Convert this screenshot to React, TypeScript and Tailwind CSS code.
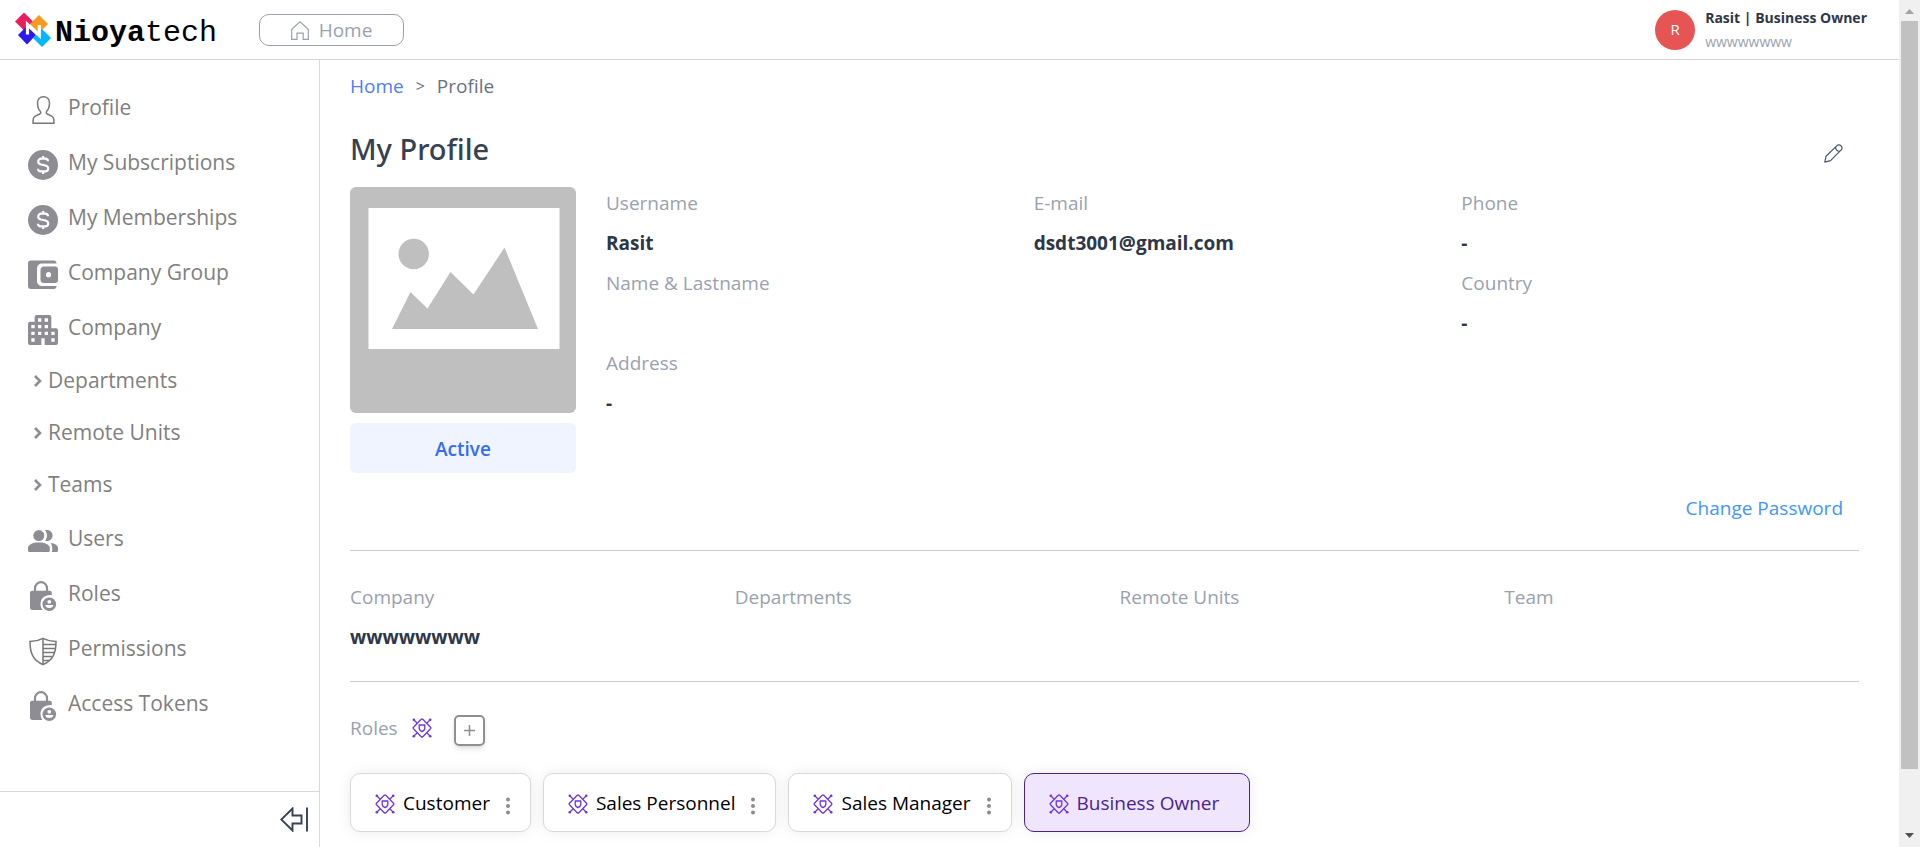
import type { ReactNode } from "react";

const Logo = () => (
  <svg viewBox="0 0 36 36" className="size-9" aria-hidden="true">
    <path d="M9 .5 18 9.500 9 18.500 0 9.500Z" fill="#e91e5c" />
    <path d="M24 3 33 12 24 21 15 12Z" fill="#f99a1c" />
    <path d="M12 14 21 23 12 32.500 3 23Z" fill="#2a1aef" />
    <path d="M27 17 36 26 27 35 18 26Z" fill="#00b8ff" />
    <path d="M12.500 22.500V12.500L24.300 23.500V13" fill="none" stroke="#fff" strokeWidth="3.200" />
  </svg>
);

const HomeIcon = () => (
  <svg viewBox="0 0 18 19" className="h-[19px] w-[18px]" fill="none" stroke="currentColor" strokeWidth="1.200" aria-hidden="true">
    <path d="M.7 8.200 9 .9l8.300 7.300v10.100h-5.100v-6.200H6v6.200H.7Z" />
  </svg>
);

const PersonIcon = () => (
  <svg viewBox="0 0 30 30" className="size-[30px]" fill="none" stroke="#77777b" strokeWidth="1.500" aria-hidden="true">
    <path d="M15.500 1.700c-3.800 0-6 2.700-6 6.300 0 3.700 1.200 6.700 3 8.600.6.900.2 1.900-.8 2.400l-4.400 2.200c-1.500.8-2.200 2-2.200 3.700v3.400h20.800v-3.400c0-1.700-.7-2.900-2.200-3.700L19.300 19c-1-.5-1.400-1.500-.8-2.400 1.800-1.900 3-4.900 3-8.600 0-3.600-2.200-6.300-6-6.300Z" />
  </svg>
);

const DollarIcon = () => (
  <svg viewBox="0 0 30 30" className="size-[30px]" aria-hidden="true">
    <circle cx="15" cy="15" r="15" fill="#8e8d94" />
    <path d="M20 11.300c0-1.500-1.200-2.700-2.800-2.700h-3.900c-1.800 0-3.100 1.300-3.100 3 0 1.600 1.100 2.600 2.700 3l4.500.9c1.700.4 2.800 1.500 2.800 3 0 1.700-1.300 2.900-3.100 2.900h-4.200c-1.700 0-2.900-1.100-2.900-2.700M15.200 6v2.500M15.200 21.500V24" fill="none" stroke="#fff" strokeWidth="2.100" />
  </svg>
);

const WalletIcon = () => (
  <svg viewBox="0 0 30 30" className="size-[30px]" fill="#8e8d94" aria-hidden="true">
    <path d="M3 .5h23c1.300 0 2.400 1 2.600 3H14.500C11 3.500 9 5.500 9 9v11.500c0 3.500 2 5.500 5.500 5.500h14.100c-.2 2-1.300 3-2.600 3H3c-1.900 0-3-1.100-3-3V3.500c0-1.900 1.100-3 3-3Z" />
    <path fillRule="evenodd" d="M16 6.500h11c1.900 0 3 1 3 2.800v11c0 1.800-1.100 2.700-3 2.700H16c-2.400 0-3.500-1.300-3.500-3.500V10c0-2.200 1.100-3.500 3.500-3.500Zm4.500 5.600a2.600 2.600 0 1 0 0 5.200 2.600 2.600 0 0 0 0-5.200Z" />
  </svg>
);

const BuildingIcon = () => (
  <svg viewBox="0 0 9 9" className="size-[30px]" aria-hidden="true">
    <path fill="#8e8d94" d="M2.600 0h3.800q.6 0 .6.600V4h1.400q.6 0 .6.600v3.800q0 .6-.6.600H.6Q0 9 0 8.400V2.600Q0 2 .6 2H2V.6Q2 0 2.600 0Z" />
    <path fill="#fff" d="M3 1h1v1H3ZM5 1h1v1H5ZM1 3h1v1H1ZM3 3h1v1H3ZM5 3h1v1H5ZM1 5h1v1H1ZM3 5h1v1H3ZM5 5h1v1H5ZM7 5h1v1H7ZM1 7h1v1H1ZM7 7h1v1H7ZM4 7h1v2H4Z" />
  </svg>
);

const UsersIcon = () => (
  <svg viewBox="0 0 30 30" className="size-[30px]" fill="#8e8d94" aria-hidden="true">
    <circle cx="10.800" cy="9.600" r="5.500" />
    <path d="M17 4.300c4.400-1 7.600 1.700 7.600 5.300s-3.200 6.300-7.600 5.300c2.700-3.100 2.700-7.500 0-10.600Z" />
    <path d="M0 22c0-3.600 4.700-5.600 10.800-5.600s11 2 11 5.600v2.500c0 1-.6 1.500-1.500 1.500H1.500C.6 26 0 25.500 0 24.500Z" />
    <path d="M22.500 16.900c4.500.5 7.500 2.300 7.500 5.100v2.500c0 1-.6 1.500-1.500 1.500h-5c.5-.7.700-1.100.7-2v-2c0-2.200-.5-3.600-1.700-5.100Z" />
  </svg>
);

const LockIcon = () => (
  <svg viewBox="0 0 30 30" className="size-[30px]" aria-hidden="true">
    <path d="M7 11V7.200a6 6 0 0 1 12 0V11" fill="none" stroke="#8e8d94" strokeWidth="2.200" />
    <path d="M4.500 9.700h17c1.500 0 2.300.8 2.300 2.300v2.200c-6.500-.7-11.300 3-11.300 8.800 0 2.300.8 4.300 2 6H4.500C3 29 2 28.100 2 26.600V12c0-1.500 1-2.300 2.500-2.300Z" fill="#8e8d94" />
    <circle cx="21.300" cy="23.200" r="6.800" fill="#8e8d94" />
    <circle cx="21.300" cy="20.800" r="1.900" fill="#fff" />
    <path d="M17.300 24h8c0 2-1.700 3-4 3s-4-1-4-3Z" fill="#fff" />
  </svg>
);

const ShieldIcon = () => (
  <svg viewBox="0 0 30 30" className="size-[30px]" fill="none" stroke="#77777b" strokeWidth="1.500" aria-hidden="true">
    <path d="M15 2.300C11 4.400 6.500 5.500 2 5.600 2 16.500 4.700 24.500 15 28.500 25.300 24.500 28 16.500 28 5.600 23.500 5.500 19 4.400 15 2.300Z" />
    <path d="M15 2.300v26M15 8.500h13M15 12.500h12.500M15 16.500h11.500M15 20.500h9.500M15 24.500h6" />
  </svg>
);

const ChevronIcon = () => (
  <svg viewBox="0 0 8 12" className="h-3 w-2" fill="none" stroke="#8e8d94" strokeWidth="2.600" aria-hidden="true">
    <path d="M1 1 6 6 1 11" />
  </svg>
);

const CollapseIcon = () => (
  <svg viewBox="0 0 28 25" className="h-[25px] w-7" fill="none" stroke="#374151" strokeWidth="1.900" aria-hidden="true">
    <path d="M12.500 1.500V8.500h9v8h-9v7L1.300 12.500ZM27 .5v24" />
  </svg>
);

const PencilIcon = () => (
  <svg viewBox="0 0 19 19" className="size-[19px]" fill="none" stroke="#475569" strokeWidth="1.200" strokeLinejoin="round" aria-hidden="true">
    <path d="M.8 18.200 2 12.300 12.700 1.900c1.400-1.400 3.100-1.400 4.300-.1 1.300 1.200 1.400 3 0 4.400L6.500 16.700Z" />
    <path d="M11.500 3.100c.1 2.500 1.800 4.200 4.300 4.300" />
  </svg>
);

const RoleIcon = () => (
  <svg viewBox="0 0 20 20" className="size-5 shrink-0" fill="none" stroke="#6d35de" strokeWidth="1.300" strokeLinejoin="round" aria-hidden="true">
    <path d="M9.200 1.300q.8-.7 1.600 0l7.700 7.900q.7.800 0 1.600l-7.700 7.900q-.8.700-1.600 0L1.500 10.800q-.7-.8 0-1.600Z" />
    <path d="M7.200 7h5.600v3.300c0 1.700-1 2.600-2.800 3.400-1.800-.8-2.800-1.700-2.800-3.400Z" />
    <path d="M1.500 1.500 5 5M18.500 1.500 15 5M1.500 18.500 5 15M18.500 18.500 15 15" />
    <g fill="#6d35de" stroke="none">
      <circle cx="1.800" cy="1.800" r="1.300" />
      <circle cx="18.200" cy="1.800" r="1.300" />
      <circle cx="1.800" cy="18.200" r="1.300" />
      <circle cx="18.200" cy="18.200" r="1.300" />
    </g>
  </svg>
);

const DotsIcon = () => (
  <svg viewBox="0 0 4 18" className="h-[18px] w-1" fill="#8b8b8f" aria-hidden="true">
    <circle cx="2" cy="2.500" r="2" />
    <circle cx="2" cy="9" r="2" />
    <circle cx="2" cy="15.500" r="2" />
  </svg>
);

const PlaceholderImage = () => (
  <svg viewBox="0 0 226 226" role="img" aria-label="Profile photo" className="w-full rounded-md">
    <rect width="226" height="226" fill="#bfbfbf" />
    <rect x="18.500" y="21" width="191" height="141" fill="#fff" />
    <circle cx="63.700" cy="67" r="15.200" fill="#bfbfbf" />
    <path d="M42 142 60.500 105 77.500 121.500 100.500 85 123.500 107.500 154.500 60.500 188 142Z" fill="#bfbfbf" />
  </svg>
);

type NavItem = { label: string; icon?: ReactNode };

const navItems: NavItem[] = [
  { label: "Profile", icon: <PersonIcon /> },
  { label: "My Subscriptions", icon: <DollarIcon /> },
  { label: "My Memberships", icon: <DollarIcon /> },
  { label: "Company Group", icon: <WalletIcon /> },
  { label: "Company", icon: <BuildingIcon /> },
  { label: "Departments" },
  { label: "Remote Units" },
  { label: "Teams" },
  { label: "Users", icon: <UsersIcon /> },
  { label: "Roles", icon: <LockIcon /> },
  { label: "Permissions", icon: <ShieldIcon /> },
  { label: "Access Tokens", icon: <LockIcon /> },
];

function Field({ label, value }: { label: string; value?: string }) {
  return (
    <div className="text-[19px] leading-10">
      <dt className="text-gray-400">{label}</dt>
      <dd className="h-10 font-bold text-[#2d3748]">{value}</dd>
    </div>
  );
}

function Header() {
  return (
    <header className="flex h-[60px] shrink-0 items-center border-b border-[#d9d9dc] pr-8 pl-[15px]">
      <a href="#" className="flex items-center gap-1 font-['Liberation_Mono',monospace] text-[30px] leading-none text-black">
        <Logo />
        <span className="pt-1.5">
          <b>Nioya</b>tech
        </span>
      </a>
      <button className="ml-[42px] flex h-8 w-[145px] items-center justify-center gap-2.5 rounded-[10px] border border-gray-400 pt-0.5 text-[19px] text-gray-400">
        <HomeIcon />
        Home
      </button>
      <div className="ml-auto flex items-center gap-2.5">
        <span className="flex size-10 items-center justify-center rounded-full bg-[#e75454] text-[15px] text-white">R</span>
        <div className="text-sm leading-6">
          <p className="font-bold text-[#2d3748]">Rasit | Business Owner</p>
          <p className="text-gray-400">wwwwwwww</p>
        </div>
      </div>
    </header>
  );
}

function Sidebar() {
  return (
    <aside className="flex w-80 shrink-0 flex-col border-r border-[#d9d9dc]">
      <nav className="flex-1 overflow-hidden pt-5">
        <ul>
          {navItems.map(({ label, icon }) => (
            <li key={label}>
              {icon ? (
                <a href="#" className="flex h-[55px] items-center gap-2.5 pl-7 text-[21px] text-[#808080]">
                  <span className="pt-1">{icon}</span>
                  {label}
                </a>
              ) : (
                <a href="#" className="flex h-[52px] items-center gap-1.5 pl-[34px] text-[21px] text-[#808080]">
                  <ChevronIcon />
                  {label}
                </a>
              )}
            </li>
          ))}
        </ul>
      </nav>
      <div className="flex h-14 shrink-0 items-center justify-end border-t border-[#d9d9dc] pr-[11px]">
        <button aria-label="Collapse sidebar">
          <CollapseIcon />
        </button>
      </div>
    </aside>
  );
}

function RoleCard({ label }: { label: string }) {
  return (
    <li className="flex h-[59px] items-center rounded-[10px] border border-[#d9d9dc] bg-white pt-[3px] pr-5 pl-6 text-[19px] text-black shadow-[0_0_14px_rgba(0,0,0,0.08)]">
      <RoleIcon />
      <span className="mr-4 ml-2">{label}</span>
      <button aria-label={`${label} options`} className="pt-1">
        <DotsIcon />
      </button>
    </li>
  );
}

function ProfilePage() {
  return (
    <main className="min-w-0 flex-1 overflow-hidden pr-10 pl-[30px]">
      <nav aria-label="Breadcrumb" className="flex h-[52px] items-center gap-3 text-[19px] text-gray-500">
        <a href="#" className="text-[#4f7cf7]">Home</a>
        <span className="text-base">&gt;</span>
        <span>Profile</span>
      </nav>

      <div className="mt-3 flex h-[52px] items-center justify-between pr-4">
        <h1 className="pb-0.5 font-['Noto_Sans',sans-serif] text-[29px] font-medium text-gray-700">My Profile</h1>
        <button aria-label="Edit profile" className="pt-1.5">
          <PencilIcon />
        </button>
      </div>

      <section className="mt-[7px] flex gap-[30px]">
        <div className="mt-1 flex w-[226px] shrink-0 flex-col gap-2.5">
          <PlaceholderImage />
          <p className="flex h-[50px] items-center justify-center rounded-md bg-[#eff4ff] pt-0.5 text-[19px] font-semibold text-[#356df0]">Active</p>
        </div>
        <dl className="grid flex-1 grid-cols-3 content-start gap-x-[30px]">
          <Field label="Username" value="Rasit" />
          <Field label="E-mail" value="dsdt3001@gmail.com" />
          <Field label="Phone" value="-" />
          <div className="col-span-2">
            <Field label="Name &amp; Lastname" />
          </div>
          <Field label="Country" value="-" />
          <Field label="Address" value="-" />
        </dl>
      </section>

      <div className="mt-[15px] flex h-[63px] justify-end border-b border-[#cbcbd1] pr-4">
        <a href="#" className="text-[19px] leading-10 text-[#4096ff]">Change Password</a>
      </div>

      <dl className="grid h-[131px] grid-cols-4 content-start gap-x-[30px] border-b border-[#cbcbd1] pt-[26px]">
        <Field label="Company" value="wwwwwwww" />
        <Field label="Departments" />
        <Field label="Remote Units" />
        <Field label="Team" />
      </dl>

      <section className="pt-8">
        <div className="flex items-center text-[19px]">
          <h2 className="pb-1 text-gray-400">Roles</h2>
          <span className="mr-[22px] ml-3.5 pb-1">
            <RoleIcon />
          </span>
          <button aria-label="Add role" className="flex size-[31px] items-center justify-center rounded-[5px] border-2 border-[#8f8f8f] shadow-md">
            <svg viewBox="0 0 11 11" className="size-[11px]" stroke="#8f8f8f" strokeWidth="1.500" aria-hidden="true">
              <path d="M5.500 0v11M0 5.500h11" />
            </svg>
          </button>
        </div>
        <ul className="mt-[26px] flex gap-3">
          <RoleCard label="Customer" />
          <RoleCard label="Sales Personnel" />
          <RoleCard label="Sales Manager" />
          <li className="flex h-[59px] items-center gap-2 rounded-[10px] border border-[#4a2391] bg-[#efe6fd] pt-[3px] pr-[30px] pl-6 text-[19px] text-[#4a2391] shadow-[0_0_14px_rgba(0,0,0,0.08)]">
            <RoleIcon />
            Business Owner
          </li>
        </ul>
      </section>
    </main>
  );
}

function ScrollTrack() {
  return (
    <div aria-hidden="true" className="flex w-[21px] shrink-0 flex-col items-center bg-[#f0f0f0]">
      <div className="flex h-[21px] items-end pb-[7px]">
        <svg viewBox="0 0 9 5" className="h-[5px] w-[9px]" fill="#a3a3a3">
          <path d="M0 5 4.500 0 9 5Z" />
        </svg>
      </div>
      <div className="w-[17px] flex-[748] bg-[#c1c1c1]" />
      <div className="flex-[57]" />
      <div className="flex h-[21px] items-start pt-[7px]">
        <svg viewBox="0 0 9 5" className="h-[5px] w-[9px]" fill="#505050">
          <path d="M0 0h9L4.500 5Z" />
        </svg>
      </div>
    </div>
  );
}

export default function App() {
  return (
    <div className="flex h-screen bg-white font-['Open_Sans','Noto_Sans',sans-serif]">
      <div className="flex min-w-0 flex-1 flex-col">
        <Header />
        <div className="flex min-h-0 flex-1">
          <Sidebar />
          <ProfilePage />
        </div>
      </div>
      <ScrollTrack />
    </div>
  );
}
